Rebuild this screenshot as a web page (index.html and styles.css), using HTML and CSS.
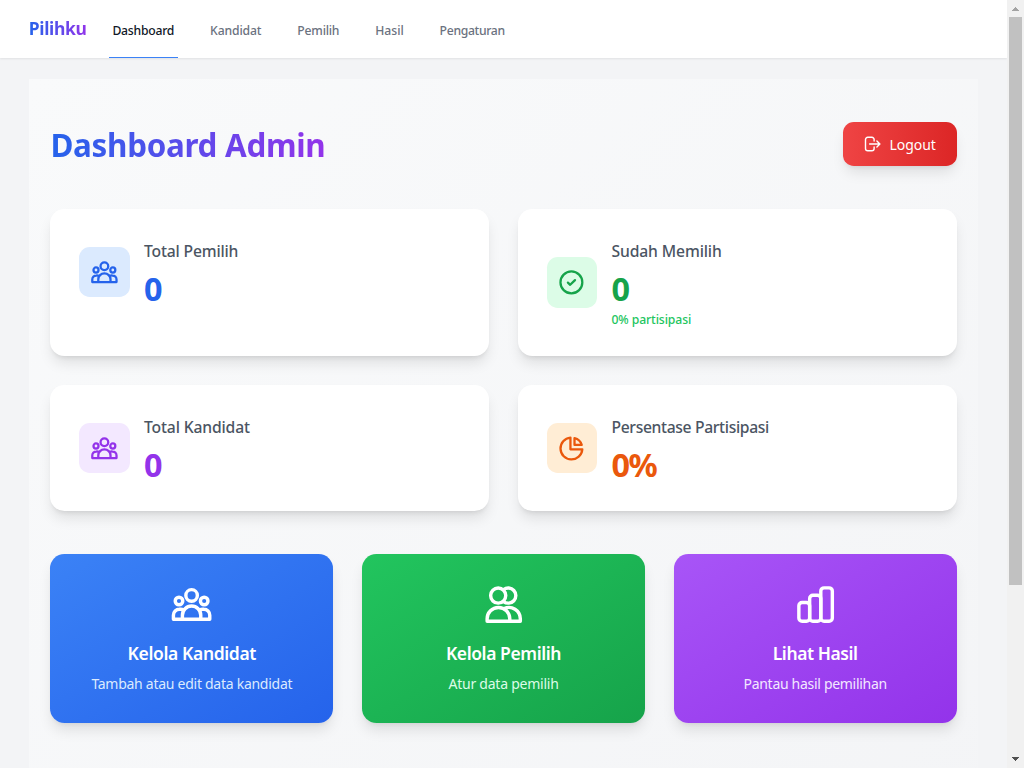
FILE: index.html
```html
<!DOCTYPE html>
<html lang="id">
<head>
<meta charset="utf-8">
<title>Pilihku</title>
<link rel="stylesheet" href="styles.css">
</head>
<body>
<svg class="defs" aria-hidden="true">
  <symbol id="group" viewBox="0 0 24 24">
    <circle cx="12" cy="6.9" r="3.2"/><circle cx="5" cy="10" r="2.1"/><circle cx="19" cy="10" r="2.1"/>
    <path d="M6.9 20.1V17.9a5.1 5.1 0 0 1 10.2 0v2.2M7.6 15.1A3.3 3.3 0 0 0 5.2 14.6 3.3 3.3 0 0 0 1.9 17.9v2.2h20.2V17.9a3.3 3.3 0 0 0-3.3-3.3 3.3 3.3 0 0 0-2.4.5"/>
  </symbol>
  <symbol id="people" viewBox="0 0 24 24">
    <circle cx="9" cy="7" r="4.2"/><path d="M12 3.7a4.2 4.2 0 1 1 0 6.6M2.85 21.3v-1.4a6.3 6.3 0 0 1 12.6 0v1.4M12.3 14.2a6.3 6.3 0 0 1 9 5.7v1.4H2.85"/>
  </symbol>
  <symbol id="bars" viewBox="0 0 24 24">
    <rect x="2.7" y="10.85" width="6" height="10.45" rx="1.8"/><rect x="8.7" y="6.8" width="6.2" height="14.5" rx="1.8"/><rect x="14.9" y="2.7" width="6.4" height="18.6" rx="1.8"/>
  </symbol>
  <symbol id="check" viewBox="0 0 24 24">
    <circle cx="12" cy="12" r="9.1"/><path d="M9.1 12.2 11 14l4-3.9"/>
  </symbol>
  <symbol id="pie" viewBox="0 0 24 24">
    <path d="M11.2 3A9.1 9.1 0 1 0 21.1 12.8H11.2ZM14.6 9.1V3.4A8.2 8.2 0 0 1 20.6 9.1Z"/>
  </symbol>
  <symbol id="exit" viewBox="0 0 24 24">
    <path d="M13.5 8V6A3 3 0 0 0 10.5 3H5A3 3 0 0 0 2 6v12a3 3 0 0 0 3 3h5.5a3 3 0 0 0 3-3v-2M7.5 12H21M17.2 8l4 4-4 4"/>
  </symbol>
</svg>
<div class="window">
  <div class="page">
    <header class="topbar">
      <span class="brand">Pilihku</span>
      <nav class="links">
        <a class="link active"><span class="n1">Dashboard</span></a>
        <a class="link"><span class="n2">Kandidat</span></a>
        <a class="link"><span class="n3">Pemilih</span></a>
        <a class="link"><span class="n4">Hasil</span></a>
        <a class="link"><span class="n5">Pengaturan</span></a>
      </nav>
    </header>
    <main class="main">
      <div class="panel">
        <div class="heading">
          <h1 class="title">Dashboard Admin</h1>
          <button class="logout"><svg class="icon"><use href="#exit"/></svg><span>Logout</span></button>
        </div>
        <section class="stats">
          <article class="stat blue">
            <div class="tile"><svg class="icon"><use href="#group"/></svg></div>
            <div><p class="label l1">Total Pemilih</p><p class="value">0</p></div>
          </article>
          <article class="stat green">
            <div class="tile"><svg class="icon"><use href="#check"/></svg></div>
            <div><p class="label l2">Sudah Memilih</p><p class="value">0</p><p class="note">0% partisipasi</p></div>
          </article>
          <article class="stat purple">
            <div class="tile"><svg class="icon"><use href="#group"/></svg></div>
            <div><p class="label l3">Total Kandidat</p><p class="value">0</p></div>
          </article>
          <article class="stat orange">
            <div class="tile"><svg class="icon"><use href="#pie"/></svg></div>
            <div><p class="label l4">Persentase Partisipasi</p><p class="value">0%</p></div>
          </article>
        </section>
        <section class="actions">
          <a class="action a-blue"><svg class="icon"><use href="#group"/></svg><h3 class="t1">Kelola Kandidat</h3><p class="s1">Tambah atau edit data kandidat</p></a>
          <a class="action a-green"><svg class="icon"><use href="#people"/></svg><h3 class="t2">Kelola Pemilih</h3><p class="s2">Atur data pemilih</p></a>
          <a class="action a-purple"><svg class="icon"><use href="#bars"/></svg><h3 class="t3">Lihat Hasil</h3><p class="s3">Pantau hasil pemilihan</p></a>
        </section>
      </div>
    </main>
  </div>
  <div class="scrollbar">
    <svg class="arrow" viewBox="0 0 17 17" shape-rendering="crispEdges"><path d="M5 11h7v-1h-1V9h-1V8H9V7H8v1H7v1H6v1H5z" fill="#a3a3a3"/></svg>
    <div class="track"><div class="thumb"></div></div>
    <svg class="arrow" viewBox="0 0 17 17" shape-rendering="crispEdges"><path d="M5 6h7v1h-1v1h-1v1H9v1H8V9H7V8H6V7H5z" fill="#505050"/></svg>
  </div>
</div>
</body>
</html>
```
FILE: styles.css
```css
* { box-sizing: border-box; margin: 0; padding: 0; }
html { font-size: 14.4px; }
body { height: 768px; overflow: hidden; font-family: "Noto Sans", "Open Sans", sans-serif; line-height: 1.5; background: #f3f4f6; }
.defs { display: none; }
.icon { display: block; flex: none; width: 2rem; height: 2rem; fill: none; stroke: currentColor; stroke-width: 1.9; stroke-linecap: round; stroke-linejoin: round; }
.window { display: flex; height: 768px; overflow: hidden; }
.page { flex: 1; min-width: 0; }

.topbar { display: flex; height: 58px; padding: 0 2rem; background: #fff; box-shadow: 0 1px 2px rgba(0,0,0,.08); }
.brand { align-self: center; width: 59px; padding-bottom: 2px; font-size: 17.5px; line-height: 26px; font-weight: 700; letter-spacing: -.36px; white-space: nowrap; background: linear-gradient(to right, #2563eb, #9333ea); background-clip: text; -webkit-background-clip: text; color: transparent; }
.links { display: flex; gap: 2rem; margin-left: 21px; }
.link { display: flex; align-items: center; padding: 5px .25rem 0; border-bottom: 1px solid transparent; font-size: 12.2px; font-weight: 500; color: #6b7280; white-space: nowrap; }
.link.active { color: #111827; border-color: #3b82f6; }
.n1 { letter-spacing: -.24px; }
.n2 { letter-spacing: -.14px; }
.n3 { letter-spacing: -.22px; }
.n4 { letter-spacing: -.05px; }
.n5 { letter-spacing: -.33px; }

.main { padding: 21px 2rem 0; height: 710px; }
.panel { height: 900px; padding: 43px 1.5rem; background: linear-gradient(to bottom right, #f9fafb, #f3f4f6); }
.heading { display: flex; justify-content: space-between; align-items: center; margin-bottom: 43.4px; }
.title { padding-top: 2px; font-size: 31.4px; line-height: 38px; font-weight: 700; letter-spacing: -.3px; white-space: nowrap; background: linear-gradient(to right, #2563eb, #9333ea); background-clip: text; -webkit-background-clip: text; color: transparent; }
.logout { display: flex; align-items: center; justify-content: center; gap: 7px; width: 114px; height: 44px; padding-left: 1px; border: 0; border-radius: 10.8px; font: 400 14px "Noto Sans", sans-serif; letter-spacing: -.05px; color: #fff; background: linear-gradient(to right, #ef4444, #dc2626); box-shadow: 0 9px 13.5px -2.7px rgba(0,0,0,.1), 0 3.6px 5.4px -3.6px rgba(0,0,0,.1); }
.logout .icon { width: 18px; height: 18px; }

.stats { display: grid; grid-template-columns: 1fr 1fr; grid-template-rows: 147px 126px; gap: 2rem; }
.stat { display: flex; padding: 2rem; border-radius: 14.4px; background: #fff; box-shadow: 0 9px 13.5px -2.7px rgba(0,0,0,.1), 0 3.6px 5.4px -3.6px rgba(0,0,0,.1); align-items: flex-start; }
.tile { padding: .75rem; margin: 8.8px 1rem 0 0; border-radius: 10.8px; }
.green .tile { margin-top: 19.1px; }
.label { padding-top: 1px; font-size: 15.7px; line-height: 25.2px; font-weight: 500; color: #4b5563; white-space: nowrap; }
.l1 { letter-spacing: -.18px; }
.l2 { letter-spacing: -.13px; }
.l3 { letter-spacing: -.15px; }
.l4 { letter-spacing: -.35px; }
.value { margin-top: 5.8px; font-size: 32.4px; line-height: 36px; font-weight: 700; letter-spacing: -1.4px; }
.note { margin-top: 4.8px; font-size: 12.2px; line-height: 18px; font-weight: 500; letter-spacing: -.1px; color: #22c55e; }
.blue .tile { background: #dbeafe; } .blue .tile, .blue .value { color: #2563eb; }
.green .tile { background: #dcfce7; } .green .tile, .green .value { color: #16a34a; }
.purple .tile { background: #f3e8ff; } .purple .tile, .purple .value { color: #9333ea; }
.orange .tile { background: #ffedd5; } .orange .tile, .orange .value { color: #ea580c; }

.actions { display: grid; grid-template-columns: repeat(3, 1fr); gap: 2rem; margin-top: 43px; }
.action { display: flex; flex-direction: column; align-items: center; height: 169px; padding-top: 2rem; border-radius: 14.4px; color: #fff; box-shadow: 0 9px 13.5px -2.7px rgba(0,0,0,.1), 0 3.6px 5.4px -3.6px rgba(0,0,0,.1); }
.action .icon { width: 3rem; height: 3rem; margin-bottom: 1rem; }
.action h3 { font-size: 17.5px; line-height: 25.2px; font-weight: 600; white-space: nowrap; }
.action p { margin-top: 7.2px; font-size: 14px; line-height: 21.6px; white-space: nowrap; }
.action .t1 { letter-spacing: -.37px; }
.action .t2 { letter-spacing: -.41px; }
.action .t3 { letter-spacing: -.43px; }
.action .s1 { letter-spacing: -.27px; }
.action .s2 { letter-spacing: -.24px; }
.action .s3 { letter-spacing: -.3px; }
.a-blue { background: linear-gradient(to bottom right, #3b82f6, #2563eb); } .a-blue p { color: #dbeafe; }
.a-green { background: linear-gradient(to bottom right, #22c55e, #16a34a); } .a-green p { color: #dcfce7; }
.a-purple { background: linear-gradient(to bottom right, #a855f7, #9333ea); } .a-purple p { color: #f3e8ff; }

.scrollbar { display: flex; flex-direction: column; width: 17px; background: #f1f1f1; }
.arrow { display: block; width: 17px; height: 17px; }
.track { flex: 1; padding: 0 2px; }
.thumb { height: 568px; background: #c1c1c1; }
```
